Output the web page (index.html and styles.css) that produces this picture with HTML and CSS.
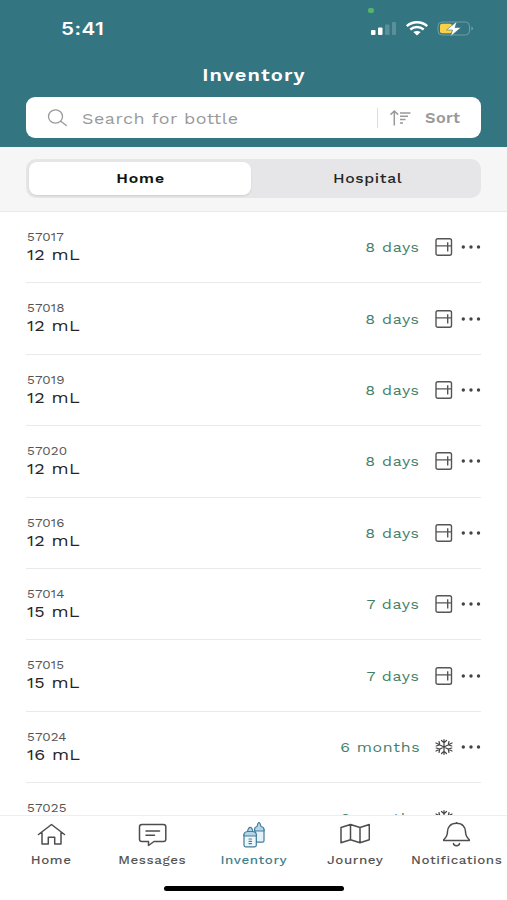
FILE: index.html
```html
<!DOCTYPE html>
<html lang="en">
<head>
<meta charset="utf-8">
<title>Inventory</title>
<link rel="stylesheet" href="styles.css">
</head>
<body>
<svg class="defs" aria-hidden="true">
  <symbol id="fridge" viewBox="0 0 18 20"><g fill="none" stroke="#555" stroke-width="1.4"><rect x="1" y="1.700" width="15.500" height="16.600" rx="1.800"/><path d="M1 8.900h15.500M12.700 5.300v9.200"/></g></symbol>
  <symbol id="snow" viewBox="0 0 18 18"><g fill="none" stroke="#454545" stroke-width="1.200" stroke-linecap="round"><path d="M9 1.500v15M1 5l16 8M1 13l16-8M6.500 2.500 9 4.800l2.500-2.300M6.500 15.500 9 13.200l2.500 2.300M1.200 8l3.600-1.100L4 3.500M16.800 8l-3.600-1.100.8-3.400M1.200 10l3.600 1.100-.8 3.400M16.800 10l-3.600 1.100.8 3.400"/></g></symbol>
  <symbol id="dots" viewBox="0 0 20 6"><g fill="#444"><circle cx="2.300" cy="3" r="1.700"/><circle cx="10" cy="3" r="1.700"/><circle cx="17.500" cy="3" r="1.700"/></g></symbol>
</svg>
<header class="header">
  <div class="status">
    <span class="clock">5:41</span>
    <i class="camera-dot"></i>
    <svg class="signals" width="104" height="18" viewBox="0 0 104 18">
      <g fill="#fff"><rect x="1" y="11" width="4.500" height="5" rx="1"/><rect x="8" y="8.500" width="4.500" height="7.500" rx="1"/></g>
      <g fill="#5a909b"><rect x="15" y="5.500" width="4.500" height="10.500" rx="1"/><rect x="22" y="3" width="4" height="13" rx="1"/></g>
      <g fill="none" stroke="#fff" stroke-width="2.500"><path d="M36.800 7.100C42.600 1.900 51.400 1.900 57.200 7.100"/><path d="M40.300 10.500c3.900-3.300 9.500-3.300 13.400 0"/></g>
      <path d="M43.300 13.100q3.700-2.300 7.400 0L47 16.600z" fill="#fff"/>
      <rect x="68" y="3" width="31.500" height="13" rx="4" fill="none" stroke="#6e9ca5"/>
      <path d="M101.500 7.500q3 2 0 4z" fill="#7ba7af"/>
      <rect x="70" y="4.700" width="12" height="9.600" rx="2" fill="#f8d146"/>
      <path d="M87 2.200 76.500 11h6l-2 6.500L91 8.500h-6z" fill="#fff" stroke="#347582" stroke-width=".6"/>
    </svg>
  </div>
  <h1 class="title"><span>Inventory</span></h1>
  <div class="search">
    <svg class="search-icon" width="22" height="20" viewBox="0 0 22 20"><g fill="none" stroke="#999" stroke-width="1.300" stroke-linecap="round"><ellipse cx="8.500" cy="8.500" rx="7" ry="6.700"/><path d="m13.800 13.200 5.500 4.300"/></g></svg>
    <span class="placeholder">Search for bottle</span>
    <span class="sort">
      <svg width="22" height="18" viewBox="0 0 22 18"><g fill="none" stroke="#999" stroke-width="1.500"><path d="M4.300 16.500V2M.5 5.600 4.300 2l3.800 3.600M10 4h10.500M10 7.300h8M10 10.600h5.500M10 13.900h3"/></g></svg>
      <span class="sort-label">Sort</span>
    </span>
  </div>
</header>
<div class="segment-bar">
  <div class="segments"><div class="segment active"><span>Home</span></div><div class="segment"><span>Hospital</span></div></div>
</div>
<main class="list">
  <div class="row"><div class="bottle"><small>57017</small><b>12 mL</b></div><span class="due">8 days</span><svg class="store"><use href="#fridge"/></svg><svg class="more"><use href="#dots"/></svg></div>
  <div class="row"><div class="bottle"><small>57018</small><b>12 mL</b></div><span class="due">8 days</span><svg class="store"><use href="#fridge"/></svg><svg class="more"><use href="#dots"/></svg></div>
  <div class="row"><div class="bottle"><small>57019</small><b>12 mL</b></div><span class="due">8 days</span><svg class="store"><use href="#fridge"/></svg><svg class="more"><use href="#dots"/></svg></div>
  <div class="row"><div class="bottle"><small>57020</small><b>12 mL</b></div><span class="due">8 days</span><svg class="store"><use href="#fridge"/></svg><svg class="more"><use href="#dots"/></svg></div>
  <div class="row"><div class="bottle"><small>57016</small><b>12 mL</b></div><span class="due">8 days</span><svg class="store"><use href="#fridge"/></svg><svg class="more"><use href="#dots"/></svg></div>
  <div class="row"><div class="bottle"><small>57014</small><b>15 mL</b></div><span class="due">7 days</span><svg class="store"><use href="#fridge"/></svg><svg class="more"><use href="#dots"/></svg></div>
  <div class="row"><div class="bottle"><small>57015</small><b>15 mL</b></div><span class="due">7 days</span><svg class="store"><use href="#fridge"/></svg><svg class="more"><use href="#dots"/></svg></div>
  <div class="row"><div class="bottle"><small>57024</small><b>16 mL</b></div><span class="due">6 months</span><svg class="store snow"><use href="#snow"/></svg><svg class="more"><use href="#dots"/></svg></div>
  <div class="row"><div class="bottle"><small>57025</small></div><span class="due">6 months</span><svg class="store snow"><use href="#snow"/></svg><svg class="more"><use href="#dots"/></svg></div>
</main>
<nav class="nav">
  <div class="tabs">
    <div class="tab"><svg viewBox="0 0 30 28"><path d="M2.500 12.500 15.500 2.500l13 10M6 10.500V22h6.300v-6.800h6.400V22H25V10.500"/></svg><span>Home</span></div>
    <div class="tab"><svg viewBox="0 0 30 28"><path d="M5 2.500h21.500q2.300 0 2.300 2.300v12.400q0 2.300-2.300 2.300H17l-5.500 4v-4H5q-2.500 0-2.500-2.300V4.800Q2.500 2.500 5 2.500zM9 9h13.500M9 13.300h8.500"/></svg><span>Messages</span></div>
    <div class="tab selected"><svg viewBox="0 0 30 28"><g stroke-width="1.200"><path fill="#e5f1f8" d="M16.500 7.500h9.500v11.200q0 1.500-1.500 1.500h-6z"/><path fill="#b4d5e8" d="M16.500 7.500q0-2.500 2.500-3Q19.800.5 21 .5t2 4q3 .5 3 3V9h-9z"/><path fill="#edf6fa" d="M6 12.500h12.300v10.800q0 1.500-1.500 1.500H7.500q-1.500 0-1.500-1.500z"/><path fill="#b4d5e8" d="M6 14v-1.500q0-2.500 3.500-3 .8-4.200 2.700-4.200t2.700 4.200q3.400.5 3.400 3V14z"/><path d="M10 9.500h4.500M11 17h2.500M11 19.300h2.500M11 21.600h2.500"/></g></svg><span>Inventory</span></div>
    <div class="tab"><svg viewBox="0 0 30 28"><path d="m1 5.500 9.500-3 9.500 3 9.300-3v15.200l-9.300 3-9.500-3-9.500 3zM10.500 2.500v15.200M20 5.500v15.200"/></svg><span>Journey</span></div>
    <div class="tab"><svg viewBox="0 0 30 28"><path d="M15.500 0v1.300M15.500 1.300c6.400 0 9 4.200 9 8.300 0 4.500 1.800 6.400 3.800 8.200v.7H2.700v-.7c2-1.800 3.800-3.700 3.800-8.200 0-4.100 2.600-8.300 9-8.300zM12.500 21.500q0 2 3 2.300 3-.3 3-2.300"/></svg><span>Notifications</span></div>
  </div>
  <div class="home-indicator"></div>
</nav>
</body>
</html>
```
FILE: styles.css
```css
* { box-sizing: border-box; }
body {
  margin: 0;
  width: 507px;
  height: 900px;
  display: flex;
  flex-direction: column;
  overflow: hidden;
  background: #fff;
  color: #252525;
  font-family: "Work Sans", Inter, "Liberation Sans", sans-serif;
}
.defs { position: absolute; width: 0; height: 0; }
svg { flex: none; display: block; }
.header { flex: none; height: 147px; background: #347582; color: #fff; }
.status {
  position: relative;
  height: 60px;
  padding: 2px 33px 6px 61px;
  display: flex;
  align-items: center;
  justify-content: space-between;
}
.clock {
  font-family: Inter, sans-serif;
  font-size: 17.500px;
  font-weight: 600;
  letter-spacing: .4px;
  transform: scaleX(1.18);
  transform-origin: left;
}
.camera-dot {
  position: absolute;
  left: 368px;
  top: 8px;
  width: 6px;
  height: 5px;
  border-radius: 2px;
  background: #54b46c;
}
.title {
  margin: 0;
  padding-left: 1px;
  height: 37px;
  line-height: 30px;
  font-size: 17.500px;
  font-weight: 600;
  letter-spacing: .950px;
  text-align: center;
}
.title span { display: inline-block; transform: scaleX(1.15); }
.search {
  height: 41px;
  margin: 0 26px;
  padding: 0 20px 0 21px;
  display: flex;
  align-items: center;
  background: #fff;
  border-radius: 9px;
  color: #999;
}
.placeholder {
  margin: 1px auto 0 13px;
  font-size: 16px;
  letter-spacing: .450px;
  transform: scaleX(1.12);
  transform-origin: left;
}
.sort {
  display: flex;
  align-items: center;
  gap: 13px;
  height: 20px;
  padding-left: 12px;
  border-left: 1px solid #ddd;
}
.sort-label {
  width: 36px;
  margin-top: 2px;
  font-size: 14.500px;
  font-weight: 600;
  letter-spacing: .4px;
  transform: scaleX(1.12);
  transform-origin: left;
}
.segment-bar {
  flex: none;
  height: 65px;
  padding: 12px 26px 0;
  background: #f6f6f6;
  border-bottom: 1px solid #e9e9e9;
}
.segments {
  display: flex;
  height: 39px;
  padding: 3px;
  border-radius: 10px;
  background: #e6e6e8;
}
.segment {
  flex: 1;
  padding-left: 6px;
  line-height: 32px;
  text-align: center;
  font-size: 14px;
  font-weight: 500;
  letter-spacing: .550px;
}
.segment span { display: inline-block; transform: scaleX(1.13); }
.segment.active {
  flex: 0 0 222px;
  padding-left: 1px;
  background: #fff;
  border-radius: 8px;
  color: #111;
  font-weight: 600;
  letter-spacing: .8px;
  box-shadow: 0 1px 2px rgba(0, 0, 0, .1);
}
.list { flex: 1; min-height: 0; overflow: hidden; padding: 0 26px; }
.row {
  height: 71.400px;
  display: flex;
  align-items: center;
  border-bottom: 1.500px solid #e9e9e9;
}
.bottle { flex: 1; align-self: flex-start; padding: 17px 0 0 1px; }
.bottle small, .bottle b {
  display: block;
  width: 100px;
  font-weight: 400;
  transform: scaleX(1.12);
  transform-origin: left;
}
.bottle small { font-size: 12px; line-height: 16px; letter-spacing: .1px; color: #555; }
.bottle b { margin-top: -1px; font-size: 16px; line-height: 21px; letter-spacing: .3px; }
.due {
  font-size: 14px;
  letter-spacing: .6px;
  color: #438069;
  transform: scaleX(1.14);
  transform-origin: right;
}
.store { width: 18px; height: 20px; margin: 0 8px 0 15px; }
.store.snow { height: 18px; }
.more { width: 20px; height: 6px; }
.nav {
  flex: none;
  height: 85px;
  border-top: 1px solid #eee;
  background: #fff;
}
.tabs { display: flex; height: 70px; }
.tab {
  flex: 0 0 20%;
  display: flex;
  flex-direction: column;
  align-items: center;
  padding-top: 6px;
  color: #555;
}
.tab svg {
  width: 30px;
  height: 28px;
  fill: none;
  stroke: #4d4d4d;
  stroke-width: 1.500;
  stroke-linejoin: round;
  stroke-linecap: round;
}
.tab span {
  margin: 2px 0 0 1px;
  font-size: 12px;
  line-height: 17px;
  font-weight: 500;
  letter-spacing: .5px;
  transform: scaleX(1.12);
}
.tab.selected { color: #42808c; }
.tab.selected svg { stroke: #427c98; }
.home-indicator {
  width: 180px;
  height: 5px;
  margin: 0 auto;
  border-radius: 3px;
  background: #000;
}
```
